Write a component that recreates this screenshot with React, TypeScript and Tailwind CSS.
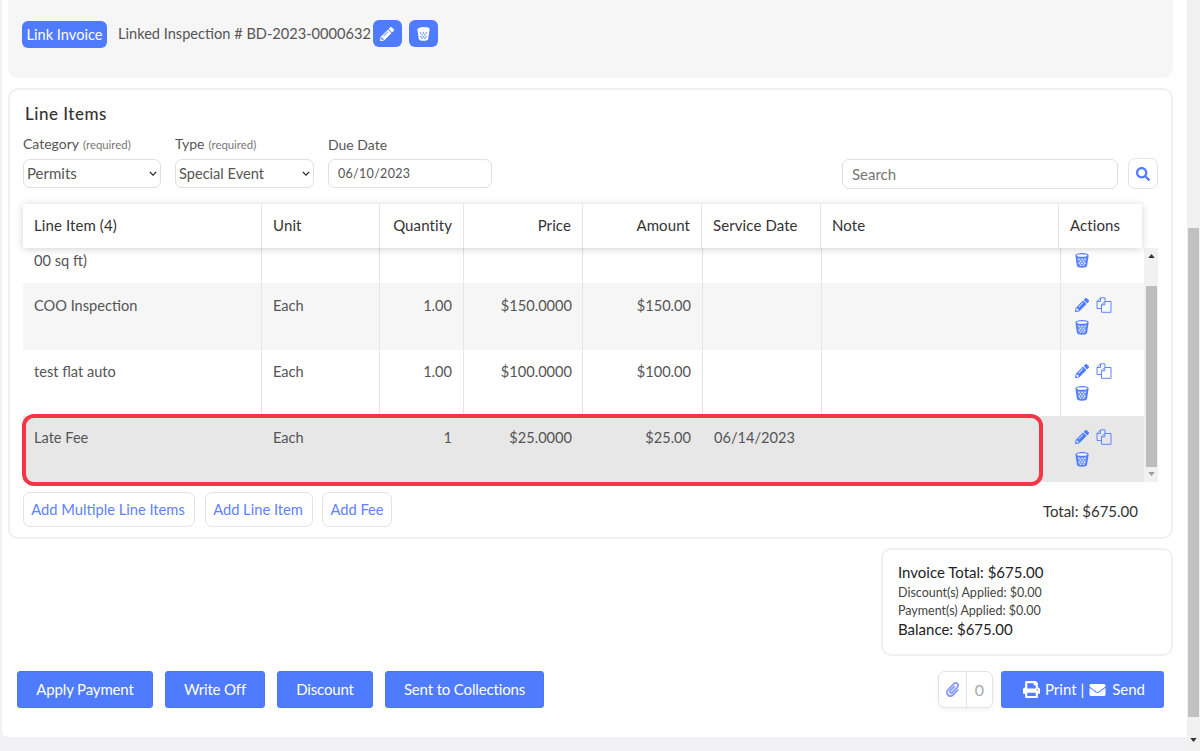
import React from "react";
import { FaPencilAlt, FaSearch, FaPrint, FaEnvelope, FaPaperclip } from "react-icons/fa";

const Bin = ({ className = "", dots = "#e4ebff", body = "#6f93ff" }: { className?: string; dots?: string; body?: string }) => (
  <svg viewBox="0 0 14 15" className={className} fill="none">
    <path d="M1.2 3.2 L2.6 12.6 C3 14.4 11 14.4 11.4 12.6 L12.8 3.2" stroke="currentColor" strokeWidth="1.4" fill={body} />
    <ellipse cx="7" cy="2.6" rx="6" ry="1.9" stroke="currentColor" strokeWidth="1.3" fill="#ffffff" />
    {[[4, 6.4], [7, 6.4], [10, 6.4], [5.5, 8.4], [8.5, 8.4], [4.3, 10.4], [7, 10.4], [9.7, 10.4], [5.5, 12.2], [8.5, 12.2]].map(([x, y], i) => (
      <circle key={i} cx={x} cy={y} r="0.8" fill={dots} />
    ))}
  </svg>
);

const CopyIcon = ({ className = "" }: { className?: string }) => (
  <svg viewBox="0 0 16 16" className={className} fill="none" stroke="currentColor" strokeWidth="1">
    <path d="M5.5 11.5H1V4.5L4.5 0.8H9V4.5" />
    <path d="M1 4.5H4.5V0.8" />
    <path d="M5.5 15.3V7.8L8.8 4.5H15V15.3Z" />
    <path d="M5.5 7.8H8.8V4.5" />
  </svg>
);

const cols = "grid-cols-[239px_118px_84px_119px_119px_119px_238px_83px]";
const bodyCols = "grid-cols-[239px_118px_84px_119px_120px_119px_239px_83px]";

const Head = ({ children, right, last }: { children: React.ReactNode; right?: boolean; last?: boolean }) => (
  <div className={`flex items-center px-[11px] pb-[2px] text-[15px] tracking-[0.1px] text-[#333] ${right ? "justify-end" : ""} ${last ? "" : "border-r border-[#e6e6e6]"}`}>
    {children}
  </div>
);

const Cell = ({ children, right, last, pr, pt }: { children?: React.ReactNode; right?: boolean; last?: boolean; pr?: boolean; pt: string }) => (
  <div className={`pl-[11px] ${pr ? "pr-[10px]" : "pr-[11px]"} ${pt} text-[14.6px] leading-[20px] text-[#555] ${right ? "text-right" : ""} ${last ? "" : "border-r border-[#e6e6e6]"}`}>
    {children}
  </div>
);

const Actions = ({ pt }: { pt: string }) => (
  <div className={`pl-[14px] ${pt}`}>
    <div className="flex items-center gap-[7px] h-[18px]">
      <FaPencilAlt className="w-[14px] h-[14px] text-[#4f7bff]" />
      <CopyIcon className="w-[16px] h-[16px] text-[#5f86ff]" />
    </div>
    <Bin className="w-[14px] h-[15px] text-[#4f7bff] mt-[6px]" />
  </div>
);

const Row = ({ bg, data, h = "h-[66px]", pt = "pt-[12px]" }: { bg: string; data: string[]; h?: string; pt?: string }) => (
  <div className={`grid ${bodyCols} ${h} ${bg}`}>
    <Cell pt={pt}>{data[0]}</Cell>
    <Cell pt={pt}>{data[1]}</Cell>
    <Cell pt={pt} right>{data[2]}</Cell>
    <Cell pt={pt} right pr>{data[3]}</Cell>
    <Cell pt={pt} right>{data[4]}</Cell>
    <Cell pt={pt}>{data[5]}</Cell>
    <Cell pt={pt} />
    <Actions pt={pt} />
  </div>
);

const BlueBtn = ({ children, w }: { children: React.ReactNode; w: string }) => (
  <button className={`h-[37px] ${w} bg-[#4f7bff] rounded-[3px] text-white text-[15px] tracking-[-0.15px] border border-[#4a76f5]`}>{children}</button>
);

const OutBtn = ({ children, w }: { children: React.ReactNode; w: string }) => (
  <button className={`h-[35px] ${w} bg-white border border-[#e3e3e3] rounded-[7px] text-[14.7px] text-[#5f7fff]`}>{children}</button>
);

const Req = () => <span className="text-[11.4px] text-[#777] ml-[4px]">(required)</span>;

const Chevron = () => (
  <svg viewBox="0 0 10 6" className="w-[8px] h-[5px]"><path d="M1 1l4 4 4-4" stroke="#222" strokeWidth="1.6" fill="none" /></svg>
);

export default function App() {
  return (
    <div className="relative w-[1200px] h-[751px] overflow-hidden flex bg-[#f2f2f5] font-['Lato','Liberation_Sans',sans-serif]">
      <div className="w-[1185px] h-[737px] ml-[2px] bg-white rounded-bl-[6px] pl-[6px] pr-[14px] flex flex-col">
        <div className="h-[78px] shrink-0 bg-[#f6f6f7] rounded-b-[10px] pl-[14px] pt-[21px] flex items-start">
          <button className="h-[27px] w-[85px] bg-[#4f7bff] rounded-[6px] text-white text-[14.6px] leading-[25px]">Link Invoice</button>
          <span className="ml-[11px] text-[14.6px] leading-[25px] text-[#555]">Linked Inspection # BD-2023-0000632</span>
          <button className="ml-[2px] -mt-[1px] w-[29px] h-[27px] bg-[#4f7bff] rounded-[6px] flex items-center justify-center">
            <FaPencilAlt className="w-[14px] h-[14px] text-white" />
          </button>
          <button className="ml-[7px] -mt-[1px] w-[29px] h-[27px] bg-[#4f7bff] rounded-[6px] flex items-center justify-center">
            <Bin className="w-[13px] h-[14px] text-white" body="#ffffff" dots="#4f7bff" />
          </button>
        </div>

        <div className="relative mt-[10px] h-[451px] shrink-0 border-2 border-[#f0f0f0] rounded-[10px] pl-[13px] pr-[13px]">
          <div className="text-[17px] font-medium leading-[20px] text-[#333] pt-[14px] pl-[2px] tracking-[0.5px] h-[32px] box-content">Line Items</div>
          <div className="flex items-end h-[52px]">
            <div className="w-[138px]">
              <div className="text-[14px] leading-[18px] text-[#555] mb-[5px]">Category<Req /></div>
              <div className="h-[29px] border border-[#e0e0e0] rounded-[7px] flex items-center justify-between pl-[3px] pr-[3px] text-[15px] text-[#555]">
                Permits
                <Chevron />
              </div>
            </div>
            <div className="w-[139px] ml-[14px]">
              <div className="text-[14px] leading-[18px] text-[#555] mb-[5px]">Type<Req /></div>
              <div className="h-[29px] border border-[#e0e0e0] rounded-[7px] flex items-center justify-between pl-[3px] pr-[3px] text-[14.6px] text-[#555]">
                Special Event
                <Chevron />
              </div>
            </div>
            <div className="w-[164px] ml-[14px]">
              <div className="text-[14px] leading-[18px] text-[#555] mb-[5px]">Due Date</div>
              <div className="h-[29px] border border-[#e0e0e0] rounded-[7px] flex items-center pl-[9px] pt-[2px] text-[12.5px] tracking-[0.3px] text-[#555]">06/10/2023</div>
            </div>
            <div className="ml-auto -mb-[1px] flex items-end gap-[10px]">
              <div className="w-[276px] h-[30px] border border-[#e0e0e0] rounded-[7px] flex items-center pl-[9px] text-[15px] text-[#777]">Search</div>
              <button className="w-[30px] h-[31px] border border-[#e3e3e3] rounded-[7px] flex items-center justify-center">
                <FaSearch className="w-[14px] h-[14px] text-[#4f7bff]" />
              </button>
            </div>
          </div>

          <div className={`relative z-10 mt-[16px] w-[1119px] h-[44px] grid ${cols} bg-white shadow-[0_1px_8px_rgba(0,0,0,0.18)]`}>
            <Head>Line Item (4)</Head>
            <Head>Unit</Head>
            <Head right>Quantity</Head>
            <Head right>Price</Head>
            <Head right>Amount</Head>
            <Head>Service Date</Head>
            <Head>Note</Head>
            <Head last>Actions</Head>
          </div>

          <div className="flex w-[1135px] h-[234px]">
            <div className="w-[1121px]">
              <div className={`grid ${bodyCols} h-[35px] bg-white`}>
                <div className="px-[11px] text-[14.6px] leading-[26px] text-[#555] border-r border-[#e6e6e6]">00 sq ft)</div>
                <div className="border-r border-[#e6e6e6]" />
                <div className="border-r border-[#e6e6e6]" />
                <div className="border-r border-[#e6e6e6]" />
                <div className="border-r border-[#e6e6e6]" />
                <div className="border-r border-[#e6e6e6]" />
                <div className="border-r border-[#e6e6e6]" />
                <div className="pl-[14px] pt-[5px]"><Bin className="w-[14px] h-[15px] text-[#4f7bff]" /></div>
              </div>
              <Row bg="bg-[#f6f6f6]" h="h-[67px]" pt="pt-[13px]" data={["COO Inspection", "Each", "1.00", "$150.0000", "$150.00", ""]} />
              <Row bg="bg-white" data={["test flat auto", "Each", "1.00", "$100.0000", "$100.00", ""]} />
              <Row bg="bg-[#e7e7e7]" data={["Late Fee", "Each", "1", "$25.0000", "$25.00", "06/14/2023"]} />
            </div>
            <div className="w-[14px] bg-[#f1f1f1] flex flex-col items-center">
              <svg viewBox="0 0 8 5" className="w-[7px] h-[4px] mt-[6px]"><path d="M4 0l4 5H0z" fill="#333" /></svg>
              <div className="w-[11px] h-[181px] bg-[#bdbdbd] mt-[28px]" />
              <svg viewBox="0 0 8 5" className="w-[7px] h-[4px] mt-[5px]"><path d="M0 0h8L4 5z" fill="#999" /></svg>
            </div>
          </div>

          <div className="absolute left-[12px] top-[324px] w-[1021px] h-[72px] border-[4px] border-[#f43545] rounded-[12px]" />

          <div className="flex items-start mt-[10px]">
            <div className="flex">
              <div className="[&>button]:pr-[2px]"><OutBtn w="w-[172px]">Add Multiple Line Items</OutBtn></div>
              <div className="ml-[10px] [&>button]:pr-[2px]"><OutBtn w="w-[108px]">Add Line Item</OutBtn></div>
              <div className="ml-[9px]"><OutBtn w="w-[70px]">Add Fee</OutBtn></div>
            </div>
            <div className="ml-auto mr-[20px] mt-[9px] text-[15px] leading-[20px] text-[#333]">Total: $675.00</div>
          </div>
        </div>

        <div className="self-end mt-[9px] w-[292px] h-[108px] shrink-0 border-2 border-[#f0f0f0] rounded-[10px] pl-[15px] pt-[13px] text-[#222]">
          <div className="text-[15px] leading-[19px]">Invoice Total: $675.00</div>
          <div className="text-[12.5px] leading-[18px] text-[#444] mt-[2px]">Discount(s) Applied: $0.00</div>
          <div className="text-[12.5px] leading-[18px] text-[#444]">Payment(s) Applied: $0.00</div>
          <div className="text-[15px] leading-[18px]">Balance: $675.00</div>
        </div>

        <div className="flex items-center mt-[15px] pl-[9px] pr-[9px]">
          <div className="flex gap-[12px]">
            <BlueBtn w="w-[136px]">Apply Payment</BlueBtn>
            <BlueBtn w="w-[100px]">Write Off</BlueBtn>
            <BlueBtn w="w-[96px]">Discount</BlueBtn>
            <BlueBtn w="w-[159px]">Sent to Collections</BlueBtn>
          </div>
          <div className="ml-auto flex items-center gap-[8px]">
            <div className="flex w-[55px] h-[37px] border border-[#e3e3e3] rounded-[7px] shadow-[0_2px_4px_rgba(0,0,0,0.05)]">
              <div className="w-[28px] border-r border-[#e3e3e3] flex items-center justify-center">
                <FaPaperclip className="w-[15px] h-[15px] text-[#8b9cff]" />
              </div>
              <div className="flex-1 flex items-center justify-center text-[16px] text-[#aaa]">0</div>
            </div>
            <button className="w-[163px] h-[37px] bg-[#4f7bff] rounded-[3px] text-white text-[15px] flex items-center pl-[22px]">
              <FaPrint className="w-[17px] h-[17px] mr-[5px]" />Print |<FaEnvelope className="w-[17px] h-[16px] ml-[5px] mr-[6px]" />Send
            </button>
          </div>
        </div>
      </div>
      <div className="w-[13px] ml-auto h-[751px] bg-[#f1f1f1] flex flex-col items-center">
        <div className="w-[11px] h-[489px] bg-[#c1c1c1] mt-[228px]" />
        <svg viewBox="0 0 8 5" className="w-[7px] h-[4px] mt-[21px]"><path d="M0 0h8L4 5z" fill="#333" /></svg>
      </div>
    </div>
  );
}
